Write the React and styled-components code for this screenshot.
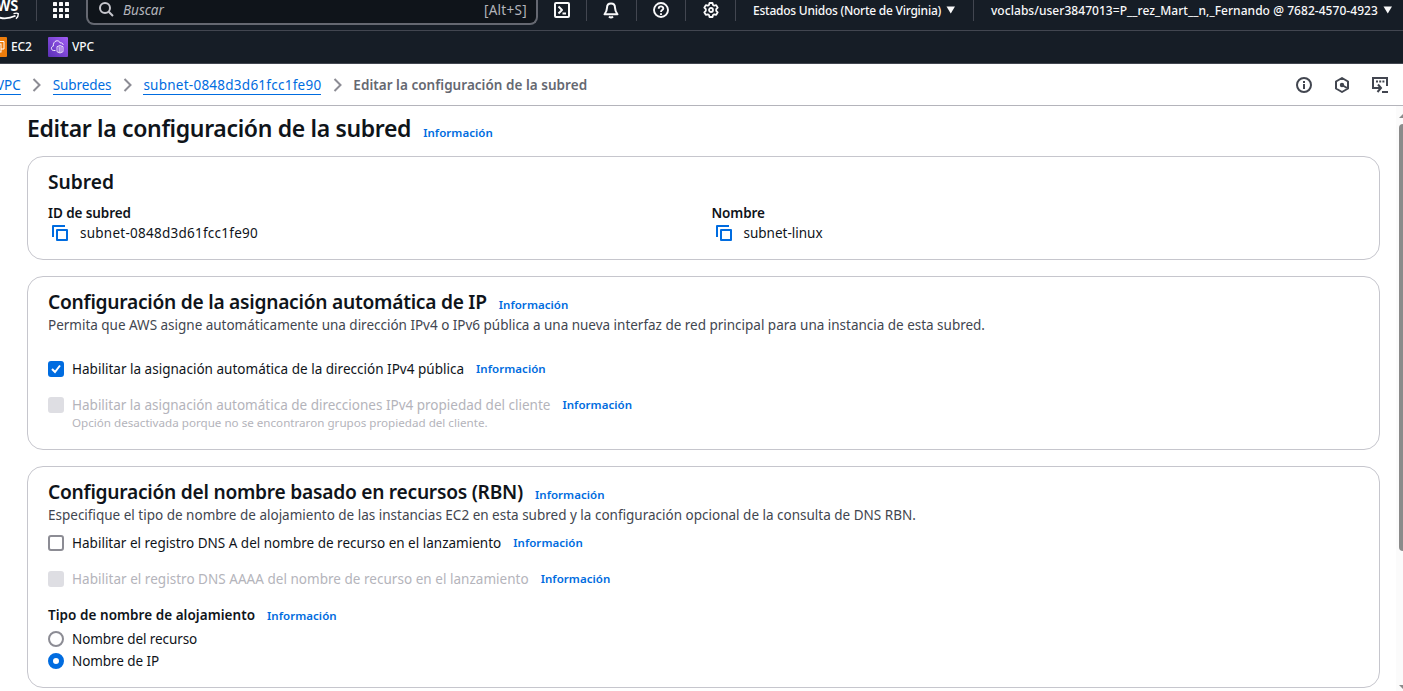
import React from 'react';
import styled, { createGlobalStyle, css } from 'styled-components';

const Global = createGlobalStyle`
  html, body { margin: 0; height: 100%; overflow: hidden; background: #fff; }
  *, *::before, *::after { box-sizing: border-box; }
  body { font-family: 'Noto Sans', 'Open Sans', sans-serif; font-size: 13.5px; line-height: 20px; color: #0f141a; }
  svg { display: block; flex: none; }
`;

const Page = styled.div`
  display: flex;
  flex-direction: column;
  height: 100vh;
  overflow: hidden;
`;

/* Top navigation */
const TopNav = styled.header`
  display: flex;
  flex: none;
  height: 31px;
  background: #161d26;
  border-bottom: 1px solid #424650;
  color: #f9f9fa;
`;
const Logo = styled.div`
  width: 36px;
  height: 21px;
  overflow: hidden;
`;
const Divider = styled.div`
  flex: none;
  width: 1px;
  height: 21px;
  background: #424650;
`;
const NavIcon = styled.div`
  display: flex;
  flex: none;
  align-items: center;
  justify-content: center;
  width: ${p => p.$w}px;
  height: 20px;
  padding-right: ${p => p.$pr || 0}px;
`;
const SearchBox = styled.div`
  display: flex;
  align-items: center;
  width: 452px;
  height: 25px;
  padding: 0 9px 5px 10px;
  background: #0f141a;
  border: 2px solid #656871;
  border-top: 0;
  border-radius: 0 0 8px 8px;
  color: #b4b4bb;
`;
const SearchHint = styled.i`
  margin-left: 9px;
  padding-top: 2px;
`;
const Shortcut = styled.span`
  margin-left: auto;
  padding-top: 2px;
  letter-spacing: 0.3px;
`;
const NavMenu = styled.div`
  display: flex;
  align-items: center;
  flex: none;
  gap: 5px;
  width: ${p => p.$w}px;
  height: 20px;
  padding-left: 17px;
  font-size: 12px;
  font-weight: 500;
  white-space: nowrap;
  letter-spacing: ${p => p.$track || 0}px;
`;
const NavMenuText = styled.span`
  padding-top: 1px;
`;

/* Favourites bar */
const Favorites = styled.nav`
  display: flex;
  align-items: center;
  flex: none;
  height: 33px;
  background: #161d26;
  border-bottom: 1px solid #424650;
  color: #f9f9fa;
  font-size: 12px;
  font-weight: 500;
  letter-spacing: -0.1px;
  overflow: hidden;
`;
const Favorite = styled.div`
  display: flex;
  align-items: center;
  gap: 4px;
  width: ${p => p.$w}px;
  margin-left: ${p => p.$shift || 0}px;
`;

/* Breadcrumbs */
const CrumbBar = styled.div`
  display: flex;
  align-items: center;
  flex: none;
  height: 42px;
  padding-right: 14px;
  border-bottom: 1px solid #b4b4bb;
`;
const Crumb = styled.a`
  height: 20px;
  line-height: 20px;
  margin-left: ${p => p.$shift || 0}px;
  color: #006ce0;
  border-bottom: 1px solid #006ce0;
  white-space: nowrap;
  letter-spacing: ${p => p.$track || 0}px;
`;
const CurrentCrumb = styled.span`
  color: #656871;
  font-weight: 600;
  white-space: nowrap;
  letter-spacing: 0.03px;
`;
const ChevronBox = styled.span`
  display: flex;
  justify-content: center;
  width: 32px;
  padding-left: 1px;
`;
const PanelTools = styled.div`
  display: flex;
  gap: 22px;
  margin-left: auto;
  color: #424650;
`;

/* Content */
const Body = styled.div`
  display: flex;
  flex: 1;
  min-height: 0;
`;
const Main = styled.main`
  display: flex;
  flex-direction: column;
  flex: 1;
  min-width: 0;
  padding: 7px 16px 0 27px;
`;
const TitleRow = styled.div`
  display: flex;
  flex: none;
  align-items: baseline;
  height: 43px;
  line-height: 30px;
`;
const H1 = styled.h1`
  margin: 0;
  font-size: 23px;
  font-weight: 600;
  letter-spacing: -0.34px;
`;
const Card = styled.section`
  flex: none;
  height: ${p => p.$h}px;
  margin-bottom: 16px;
  padding: 13px 20px 0;
  border: 1px solid #c6c6cd;
  border-radius: 16px;
`;
const CardHead = styled.div`
  display: flex;
  align-items: baseline;
  height: 25px;
  line-height: 24px;
`;
const H2 = styled.h2`
  margin: 0;
  font-size: 19.2px;
  font-weight: 600;
  letter-spacing: ${p => p.$track || 0}px;
`;
const Info = styled.a`
  margin-left: 12px;
  color: #006ce0;
  font-size: 11.5px;
  font-weight: 600;
  letter-spacing: 0.04px;
`;
const Description = styled.p`
  margin: 0;
  height: 20px;
  color: #424650;
  white-space: nowrap;
  letter-spacing: ${p => p.$track || 0}px;
`;
const Columns = styled.div`
  display: grid;
  grid-template-columns: 663.5px 1fr;
  margin-top: 8px;
`;
const Label = styled.div`
  font-weight: 600;
  letter-spacing: ${p => p.$track || 0}px;
`;
const CopyRow = styled.div`
  display: flex;
  align-items: center;
  gap: 12px;
  padding-left: 4px;
  letter-spacing: ${p => p.$track || 0}px;
`;
const Option = styled.label`
  display: flex;
  align-items: center;
  height: 20px;
  margin-top: ${p => p.$mt}px;
  color: ${p => (p.$disabled ? '#b4b4bb' : '#0f141a')};
  white-space: nowrap;
  letter-spacing: ${p => p.$track || 0}px;
`;
const control = css`
  display: flex;
  align-items: center;
  justify-content: center;
  flex: none;
  width: 16px;
  height: 16px;
  margin-right: 8px;
`;
const Checkbox = styled.span`
  ${control}
  border-radius: 3px;
  border: 2px solid #8c8c94;
  ${p => p.$state === 'checked' && css`background: #006ce0; border-color: #006ce0;`}
  ${p => p.$state === 'disabled' && css`background: #dedee3; border-color: #dedee3;`}
`;
const Radio = styled.span`
  ${control}
  border-radius: 50%;
  border: ${p => (p.$on ? '5px solid #006ce0' : '2px solid #8c8c94')};
`;
const Constraint = styled.div`
  height: 16px;
  padding-left: 24px;
  color: #b4b4bb;
  font-size: 11.63px;
  line-height: 16px;
`;
const LabelRow = styled.div`
  display: flex;
  align-items: baseline;
  height: 20px;
  margin-top: 16px;
`;

/* Scrollbar */
const Scrollbar = styled.div`
  display: flex;
  flex-direction: column;
  align-items: flex-end;
  flex: none;
  width: 7px;
  padding: 7px 0 0;
  background: #fbfbfb;
  overflow: hidden;
`;
const Thumb = styled.div`
  width: 4px;
  height: 427px;
  margin: 6px 0 134px;
  background: #8b8b8b;
  border-radius: 4px 0 0 4px;
`;

const Caret = () => <svg width="10" height="8"><path d="M.5 .5h8.500L4.750 7.500z" fill="#f9f9fa" /></svg>;
const Chevron = () => (
  <svg width="10" height="14" fill="none" stroke="#8c8c94" strokeWidth="2"><path d="M1.500 1l6 6-6 6" /></svg>
);
const CopyIcon = () => (
  <svg width="16" height="16" fill="none" stroke="#006ce0" strokeWidth="2" strokeLinejoin="round">
    <path d="M1 12V1h12" /><path d="M5 5h10v10H5z" />
  </svg>
);

export default function App() {
  return (
    <Page>
      <Global />
      <TopNav>
        <Logo>
          <svg width="36" height="21">
            <text x="-13" y="11" textLength="31.5" lengthAdjust="spacingAndGlyphs" fontSize="19" fontWeight="600" fill="#fff">aws</text>
            <path d="M-10 13Q2 22 15.500 15.800" fill="none" stroke="#fff" strokeWidth="1.800" />
            <path d="M13.500 13.700Q17 12.500 18.300 13.700Q18.500 16.500 16 18.800" fill="none" stroke="#fff" strokeWidth="1.400" />
          </svg>
        </Logo>
        <Divider />
        <NavIcon $w={49} $pr={1}>
          <svg width="16" height="16" fill="#f9f9fa">
            {[0, 6, 12].map(y => [0, 6, 12].map(x => <rect key={`${x}-${y}`} x={x} y={y} width="4" height="4" rx=".6" />))}
          </svg>
        </NavIcon>
        <SearchBox>
          <svg width="16" height="16" fill="none" stroke="#c6c6cd" strokeWidth="2">
            <circle cx="7" cy="7" r="5" /><path d="M10.700 10.700l4.300 4.300" />
          </svg>
          <SearchHint>Buscar</SearchHint>
          <Shortcut>[Alt+S]</Shortcut>
        </SearchBox>
        <NavIcon $w={48}>
          <svg width="16" height="16" fill="none" stroke="#f9f9fa" strokeWidth="2" strokeLinejoin="round">
            <rect x="1" y="1" width="14" height="14" rx="1" /><path d="M4.500 4.500L8 8l-3.500 3.500M8.500 11.500H12" />
          </svg>
        </NavIcon>
        <Divider />
        <NavIcon $w={49} $pr={1}>
          <svg width="16" height="17" fill="none" stroke="#f9f9fa" strokeWidth="2" strokeLinejoin="round">
            <path d="M8 1.500c-2.500 0-4 1.800-4 4.300C4 9 3 10.300 1.500 12.300h13C13 10.300 12 9 12 5.800c0-2.500-1.500-4.300-4-4.300z" /><path d="M6 14.500q2 2 4 0" />
          </svg>
        </NavIcon>
        <Divider />
        <NavIcon $w={48}>
          <svg width="16" height="16" fill="none" stroke="#f9f9fa" strokeWidth="1.900">
            <circle cx="8" cy="8" r="7" /><path d="M5.700 6.700c0-3 4.700-3 4.600-.2C10.200 8.200 8 7.900 8 10" /><path d="M8 11.200v1.700" />
          </svg>
        </NavIcon>
        <Divider />
        <NavIcon $w={49}>
          <svg width="17" height="16" viewBox="-.5 0 17 16" fill="none" stroke="#f9f9fa" strokeWidth="1.800" strokeLinejoin="round">
            <path d="M7 1h3l.5 2 1.200.7 2-.6 1.500 2.600L13.700 7.200v1.600l1.500 1.500-1.500 2.600-2-.6-1.200.7-.5 2H7L6.500 13l-1.200-.7-2 .6-1.500-2.600 1.500-1.500V7.200L1.800 5.700l1.500-2.600 2 .6L6.500 3z" />
            <circle cx="8.500" cy="8" r="2" />
          </svg>
        </NavIcon>
        <Divider />
        <NavMenu $w={237} $track={-0.24}><NavMenuText>Estados Unidos (Norte de Virginia)</NavMenuText><Caret /></NavMenu>
        <Divider />
        <NavMenu $w={420} $track={0.045}><NavMenuText>voclabs/user3847013=P__rez_Mart__n,_Fernando @ 7682-4570-4923</NavMenuText><Caret /></NavMenu>
      </TopNav>

      <Favorites>
        <Favorite $shift={-13} $w={61}>
          <svg width="20" height="20" fill="none" stroke="#fff">
            <rect width="20" height="20" rx="1" fill="#ed7d0c" stroke="none" />
            <path d="M8 6V4.500h9V12h-3" /><rect x="5" y="7" width="9" height="8" /><path d="M8 10h3v3H8z" />
          </svg>
          EC2
        </Favorite>
        <Favorite>
          <svg width="20" height="20" fill="none" stroke="#fff">
            <defs><linearGradient id="vpc" x1="0" y1="1" x2="1" y2="0"><stop offset="0" stopColor="#5a30b5" /><stop offset="1" stopColor="#a05cf5" /></linearGradient></defs>
            <rect width="20" height="20" rx="1" fill="url(#vpc)" stroke="none" />
            <path d="M7.500 13.500H5.500C2.800 13.300 2.700 9.500 5.300 9.100 5 3.600 10.500 2 12.300 6 14.500 5.500 15 7 15.200 8" strokeWidth=".9" />
            <path d="M12 8.500l3 1.200v5L12 16l-3-1.300v-5zM11.200 9.500v6M13 9.500v6" strokeWidth=".8" />
          </svg>
          VPC
        </Favorite>
      </Favorites>

      <CrumbBar>
        <Crumb $shift={-4}>VPC</Crumb>
        <ChevronBox><Chevron /></ChevronBox>
        <Crumb $track={-0.1}>Subredes</Crumb>
        <ChevronBox><Chevron /></ChevronBox>
        <Crumb $track={0.25}>subnet-0848d3d61fcc1fe90</Crumb>
        <ChevronBox><Chevron /></ChevronBox>
        <CurrentCrumb>Editar la configuración de la subred</CurrentCrumb>
        <PanelTools>
          <svg width="16" height="16" fill="none" stroke="currentColor" strokeWidth="2">
            <circle cx="8" cy="8" r="7" /><path d="M8 7v5M8 4v2" />
          </svg>
          <svg width="16" height="16" fill="none" stroke="currentColor" strokeWidth="2" strokeLinejoin="round">
            <path d="M8 1l6 3.500v7L8 15l-6-3.500v-7z" /><path d="M8 8l5 3" /><circle cx="8" cy="8" r="1.200" fill="currentColor" />
          </svg>
          <svg width="17" height="16" fill="none" stroke="currentColor" strokeWidth="2">
            <path d="M3 11H1V1h14v8M10 15h6M2.500 11H9M6 7.500L9 11l-3.500 4" /><path d="M4 4.500h2M7.200 4.500h2M10.400 4.500h2" />
          </svg>
        </PanelTools>
      </CrumbBar>

      <Body>
        <Main>
          <TitleRow><H1>Editar la configuración de la subred</H1><Info>Información</Info></TitleRow>

          <Card $h={104}>
            <CardHead><H2>Subred</H2></CardHead>
            <Columns>
              <div>
                <Label $track={-0.08}>ID de subred</Label>
                <CopyRow $track={0.25}><CopyIcon />subnet-0848d3d61fcc1fe90</CopyRow>
              </div>
              <div>
                <Label $track={-0.1}>Nombre</Label>
                <CopyRow><CopyIcon />subnet-linux</CopyRow>
              </div>
            </Columns>
          </Card>

          <Card $h={174}>
            <CardHead><H2 $track={-0.26}>Configuración de la asignación automática de IP</H2><Info>Información</Info></CardHead>
            <Description $track={-0.014}>Permita que AWS asigne automáticamente una dirección IPv4 o IPv6 pública a una nueva interfaz de red principal para una instancia de esta subred.</Description>
            <Option $mt={24} $track={0.014}>
              <Checkbox $state="checked">
                <svg width="12" height="12" fill="none" stroke="#fff" strokeWidth="2"><path d="M2 6l3 3 5-6.500" /></svg>
              </Checkbox>
              Habilitar la asignación automática de la dirección IPv4 pública<Info>Información</Info>
            </Option>
            <Option $mt={16} $disabled>
              <Checkbox $state="disabled" />
              Habilitar la asignación automática de direcciones IPv4 propiedad del cliente<Info>Información</Info>
            </Option>
            <Constraint>Opción desactivada porque no se encontraron grupos propiedad del cliente.</Constraint>
          </Card>

          <Card $h={222}>
            <CardHead><H2 $track={-0.26}>Configuración del nombre basado en recursos (RBN)</H2><Info>Información</Info></CardHead>
            <Description>Especifique el tipo de nombre de alojamiento de las instancias EC2 en esta subred y la configuración opcional de la consulta de DNS RBN.</Description>
            <Option $mt={8} $track={0.006}><Checkbox />Habilitar el registro DNS A del nombre de recurso en el lanzamiento<Info>Información</Info></Option>
            <Option $mt={16} $track={0.028} $disabled><Checkbox $state="disabled" />Habilitar el registro DNS AAAA del nombre de recurso en el lanzamiento<Info>Información</Info></Option>
            <LabelRow><Label $track={0.045}>Tipo de nombre de alojamiento</Label><Info>Información</Info></LabelRow>
            <Option $mt={4} $track={-0.08}><Radio />Nombre del recurso</Option>
            <Option $mt={2} $track={-0.08}><Radio $on />Nombre de IP</Option>
          </Card>
        </Main>
        <Scrollbar>
          <svg width="4" height="5"><path d="M0 5L5 0v5z" fill="#8b8b8b" /></svg>
          <Thumb />
          <svg width="4" height="5"><path d="M0 0h5v5z" fill="#8b8b8b" /></svg>
        </Scrollbar>
      </Body>
    </Page>
  );
}
